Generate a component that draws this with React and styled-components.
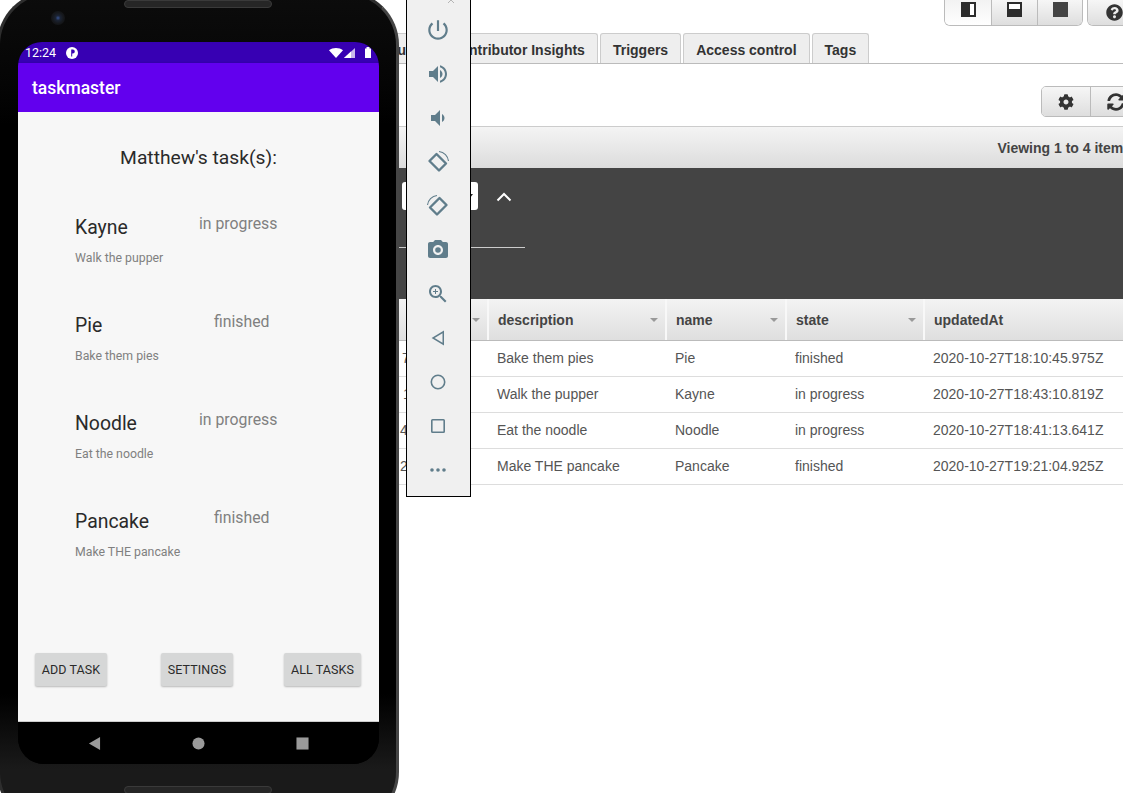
import React from 'react';
import styled, { createGlobalStyle } from 'styled-components';
import { FaCog, FaQuestionCircle, FaSyncAlt } from 'react-icons/fa';

const GlobalStyle = createGlobalStyle`
html, body {
  margin: 0;
  padding: 0;
  background: #fff;
}
* {
  box-sizing: border-box;
}
`;

const Desktop = styled.div`
position: relative;
width: 1123px;
height: 793px;
overflow: hidden;
background: #fff;
font-family: 'Liberation Sans', Arial, sans-serif;
`;

/* aws console window, sits behind the emulator */
const ConsoleWindow = styled.div`
position: absolute;
left: 350px;
top: 0;
width: 808px;
display: flex;
flex-direction: column;
`;

const TopRow = styled.div`
height: 33px;
display: flex;
justify-content: flex-end;
gap: 4px;
padding-right: 16px;
`;

const ButtonGroup = styled.div`
display: flex;
height: ${(p) => p.$height}px;
border: 1px solid #bbb;
border-top: ${(p) => (p.$flush ? 'none' : '1px solid #bbb')};
border-radius: ${(p) => (p.$flush ? '0 0 6px 6px' : '5px')};
overflow: hidden;
`;

const GroupButton = styled.div`
width: ${(p) => p.$width}px;
display: flex;
align-items: center;
justify-content: center;
padding-bottom: ${(p) => (p.$lift ? 6 : 0)}px;
color: #333;
background: ${(p) =>
  p.$active
    ? 'linear-gradient(#f2f2f2, #fff)'
    : 'linear-gradient(#f6f6f6, #dedede)'};
& + & {
  border-left: 1px solid #bbb;
}
`;

const TabRow = styled.div`
height: 31px;
display: flex;
gap: 2px;
padding-left: 1px;
border-bottom: 1px solid #bbb;
`;

const Tab = styled.div`
height: 30px;
padding: 2px 12px 0;
display: flex;
align-items: center;
background: #eee;
border: 1px solid #ccc;
border-bottom: none;
border-radius: 3px 3px 0 0;
color: #333;
font-size: 14px;
font-weight: bold;
white-space: nowrap;
`;

const ActionRow = styled.div`
height: 62px;
display: flex;
justify-content: flex-end;
padding: 22px 17px 0 0;
`;

const ViewingBar = styled.div`
height: 42px;
display: flex;
align-items: center;
justify-content: flex-end;
padding-right: 27px;
background: linear-gradient(#f4f4f4, #dcdcdc);
border-top: 1px solid #ccc;
color: #444;
font-size: 14px;
font-weight: bold;
`;

const FilterPanel = styled.div`
height: 131px;
background: #444;
padding-top: 14px;
`;

const FilterTop = styled.div`
display: flex;
align-items: center;
height: 28px;
padding-left: 52px;
`;

const FilterSelect = styled.div`
width: 76px;
height: 28px;
padding-right: 5px;
display: flex;
align-items: center;
justify-content: flex-end;
background: #fff;
border-radius: 3px;
`;

const SelectCaret = styled.span`
width: 0;
height: 0;
border-left: 3px solid transparent;
border-right: 3px solid transparent;
border-top: 4px solid #222;
`;

const Chevron = styled.svg`
width: 16px;
height: 10px;
margin: 1px 0 0 18px;
`;

const FilterRule = styled.div`
width: 175px;
height: 1px;
margin-top: 37px;
background: #ccc;
`;

const TableHead = styled.div`
display: grid;
grid-template-columns: 137px 178px 120px 138px 1fr;
height: 42px;
background: linear-gradient(#f3f3f3, #dfdfdf);
border-bottom: 1px solid #bbb;
`;

const HeadCell = styled.div`
display: flex;
align-items: center;
justify-content: ${(p) => (p.$first ? 'flex-end' : 'space-between')};
padding: 0 7px 0 9px;
color: #444;
font-size: 14px;
font-weight: bold;
border-left: ${(p) => (p.$first ? 'none' : '2px solid #f8f8f8')};
`;

const SortCaret = styled.span`
width: 0;
height: 0;
border-left: 4px solid transparent;
border-right: 4px solid transparent;
border-top: 4px solid #999;
`;

const TableRow = styled.div`
display: grid;
grid-template-columns: 137px 178px 120px 138px 1fr;
height: 36px;
padding-bottom: 1px;
align-items: center;
border-bottom: 1px solid #ddd;
color: #555;
font-size: 14px;
`;

const Cell = styled.div`
padding-left: ${(p) => p.$pad || 10}px;
white-space: nowrap;
`;

/* emulator side toolbar */
const EmulatorRail = styled.div`
position: absolute;
left: 406px;
top: -30px;
width: 65px;
display: flex;
flex-direction: column;
align-items: center;
padding: 0 1px 4px 0;
background: #f0f0f0;
border: 1px solid #000;
`;

const RailHeader = styled.div`
width: 100%;
height: 37px;
display: flex;
align-items: flex-end;
justify-content: flex-end;
padding: 0 14px 4px 0;
color: #b5b5b5;
`;

const RailButton = styled.div`
width: 44px;
height: 44px;
display: flex;
align-items: center;
justify-content: center;
color: #607d8b;
`;

const RailIcon = styled.svg`
width: ${(p) => p.$size || 24}px;
height: ${(p) => p.$size || 24}px;
fill: currentColor;
transform: ${(p) => (p.$flip ? 'scaleX(-1)' : 'none')};
`;

/* the phone */
const PhoneWindow = styled.div`
position: absolute;
left: -3px;
top: -9px;
width: 402px;
height: 835px;
display: flex;
flex-direction: column;
border: 3px solid #2e2e2e;
border-right-color: #454545;
border-radius: 54px;
background: linear-gradient(#0c0c0c 0, #050505 90px, #000 130px, #000 700px, #1a1a1a 775px);
`;

const TopBezel = styled.div`
height: 48px;
flex: none;
display: flex;
flex-direction: column;
padding-top: 6px;
`;

const Speaker = styled.div`
align-self: center;
width: 148px;
height: 8px;
border-radius: 4px;
background: #262626;
border: 1px solid #3a3a3a;
flex: none;
`;

const Camera = styled.div`
width: 14px;
height: 14px;
margin: 3px 0 0 51px;
border-radius: 50%;
background: radial-gradient(circle, #36518f 0, #1b2333 25%, #16181c 55%, #0e0e0e 100%);
flex: none;
`;

const Screen = styled.div`
width: 361px;
height: 722px;
margin-left: 18px;
flex: none;
display: flex;
flex-direction: column;
border-radius: 24px 24px 26px 26px;
overflow: hidden;
background: #000;
font-family: Roboto, sans-serif;
`;

const StatusBar = styled.div`
height: 21px;
flex: none;
display: flex;
align-items: center;
padding: 0 7px;
background: #3700b3;
color: #fff;
font-size: 12.5px;
`;

const StatusTime = styled.span`
margin-right: 10px;
`;

const StatusRight = styled.div`
margin-left: auto;
display: flex;
align-items: center;
gap: 1px;
`;

const AppBar = styled.div`
height: 49px;
flex: none;
display: flex;
align-items: center;
padding-left: 14px;
background: #6200ee;
color: #fff;
font-size: 17.5px;
font-weight: 500;
box-shadow: 0 1px 3px rgba(0, 0, 0, 0.25);
`;

const Content = styled.div`
height: 610px;
flex: none;
display: flex;
flex-direction: column;
background: #f7f7f7;
border-bottom: 1px solid #ccc;
`;

const Heading = styled.div`
height: 24px;
margin-top: 34px;
text-align: center;
color: #2a2a2a;
font-size: 19.25px;
line-height: 24px;
`;

const TaskList = styled.div`
margin-top: 41px;
display: flex;
flex-direction: column;
`;

const TaskRow = styled.div`
height: 98px;
display: grid;
grid-template-columns: 124px 90px;
grid-template-rows: 32px auto;
align-content: start;
padding-left: 57px;
`;

const TaskName = styled.div`
color: #2a2a2a;
font-size: 19.4px;
line-height: 26px;
padding-top: 4px;
`;

const TaskState = styled.div`
padding: 1px 0 0 ${(p) => (p.$done ? 15 : 0)}px;
color: #808080;
font-size: 15.8px;
line-height: 24px;
white-space: nowrap;
`;

const TaskText = styled.div`
grid-column: 1 / 3;
margin-top: 7px;
color: #808080;
font-size: 12.3px;
line-height: 16px;
`;

const ButtonRow = styled.div`
margin-top: auto;
margin-bottom: 35px;
display: flex;
justify-content: space-between;
padding: 0 18px 0 17px;
`;

const TaskButton = styled.div`
width: ${(p) => p.$width}px;
height: 33px;
margin-left: ${(p) => p.$nudge || 0}px;
display: flex;
align-items: center;
justify-content: center;
border-radius: 2px;
background: #d6d7d7;
box-shadow: 0 1px 2px rgba(0, 0, 0, 0.25);
color: #2a2a2a;
font-size: 12.5px;
letter-spacing: 0.1px;
`;

const NavBar = styled.div`
height: 42px;
flex: none;
display: flex;
align-items: center;
justify-content: center;
gap: 91px;
padding-right: 1px;
background: #000;
color: #9a9a9a;
`;

const NavIcon = styled.svg`
width: 13px;
height: 13px;
fill: currentColor;
`;

const BottomBezel = styled.div`
display: flex;
justify-content: center;
padding-top: 22px;
`;

const tasks = [
  { name: 'Kayne', state: 'in progress', text: 'Walk the pupper' },
  { name: 'Pie', state: 'finished', text: 'Bake them pies' },
  { name: 'Noodle', state: 'in progress', text: 'Eat the noodle' },
  { name: 'Pancake', state: 'finished', text: 'Make THE pancake' },
];

const rows = [
  { id: '7c', pad: 52, text: 'Bake them pies', name: 'Pie', state: 'finished', at: '2020-10-27T18:10:45.975Z' },
  { id: '1a', pad: 53, text: 'Walk the pupper', name: 'Kayne', state: 'in progress', at: '2020-10-27T18:43:10.819Z' },
  { id: '4e', pad: 50, text: 'Eat the noodle', name: 'Noodle', state: 'in progress', at: '2020-10-27T18:41:13.641Z' },
  { id: '2b', pad: 50, text: 'Make THE pancake', name: 'Pancake', state: 'finished', at: '2020-10-27T19:21:04.925Z' },
];

const rotateIcon = (
  <>
    <path d="M4 13.5 11 20.5 20.5 11 13.5 4z" fill="none" stroke="currentColor" strokeWidth="2.4" strokeLinejoin="round" />
    <path d="M1.5 11A10.5 10.5 0 0 1 11 1.5" fill="none" stroke="currentColor" strokeWidth="1.1" />
  </>
);

const railIcons = [
  { size: 26, icon: <path d="M13 3h-2v10h2V3zm4.83 2.17l-1.42 1.42C17.99 7.86 19 9.81 19 12c0 3.87-3.13 7-7 7s-7-3.13-7-7c0-2.19 1.01-4.14 2.58-5.42L6.17 5.17C4.23 6.82 3 9.26 3 12c0 4.97 4.03 9 9 9s9-4.03 9-9c0-2.74-1.23-5.18-3.17-6.83z" /> },
  { icon: <path d="M3 9v6h4l5 5V4L7 9H3zm13.5 3c0-1.77-1.02-3.29-2.5-4.03v8.05c1.48-.73 2.5-2.25 2.5-4.02zM14 3.23v2.06c2.89.86 5 3.54 5 6.71s-2.11 5.85-5 6.71v2.06c4.01-.91 7-4.49 7-8.77s-2.99-7.86-7-8.77z" /> },
  { icon: <path d="M18.5 12c0-1.77-1.02-3.29-2.5-4.03v8.05c1.48-.73 2.5-2.25 2.5-4.02zM5 9v6h4l5 5V4L9 9H5z" /> },
  { flip: true, icon: rotateIcon },
  { icon: rotateIcon },
  { icon: <path fillRule="evenodd" d="M9 2L7.17 4H4c-1.1 0-2 .9-2 2v12c0 1.1.9 2 2 2h16c1.1 0 2-.9 2-2V6c0-1.1-.9-2-2-2h-3.17L15 2H9zm3 15c-2.76 0-5-2.24-5-5s2.24-5 5-5 5 2.24 5 5-2.24 5-5 5zm0-2.2a2.8 2.8 0 1 0 0-5.6 2.8 2.8 0 0 0 0 5.6z" /> },
  { icon: <path d="M15.5 14h-.79l-.28-.27C15.41 12.59 16 11.11 16 9.5 16 5.91 13.09 3 9.5 3S3 5.91 3 9.5 5.91 16 9.5 16c1.61 0 3.09-.59 4.23-1.57l.27.28v.79l5 4.99L20.49 19l-4.99-5zm-6 0C7.01 14 5 11.99 5 9.5S7.01 5 9.5 5 14 7.01 14 9.5 11.99 14 9.5 14zM12 10h-2v2H9v-2H7V9h2V7h1v2h2v1z" /> },
  { icon: <path d="M18 4.6v14.8L5.6 12 18 4.6zM16.5 7.2 8.6 12l7.9 4.8V7.2z" fillRule="evenodd" /> },
  { icon: <path d="M12 4.5a7.5 7.5 0 1 0 0 15 7.5 7.5 0 0 0 0-15zm0 1.6a5.9 5.9 0 1 1 0 11.8 5.9 5.9 0 0 1 0-11.8z" fillRule="evenodd" /> },
  { icon: <path d="M6.5 5h11A1.5 1.5 0 0 1 19 6.5v11a1.5 1.5 0 0 1-1.5 1.5h-11A1.5 1.5 0 0 1 5 17.5v-11A1.5 1.5 0 0 1 6.5 5zm.1 1.6v10.8h10.8V6.6H6.6z" fillRule="evenodd" /> },
  { icon: <path d="M6 10.2a1.8 1.8 0 1 0 0 3.6 1.8 1.8 0 0 0 0-3.6zm6 0a1.8 1.8 0 1 0 0 3.6 1.8 1.8 0 0 0 0-3.6zm6 0a1.8 1.8 0 1 0 0 3.6 1.8 1.8 0 0 0 0-3.6z" /> },
];

const PaneIcon = ({ kind }) => (
  <svg width="15" height="15" viewBox="0 0 15 15">
    <rect width="15" height="15" fill={kind === 'full' ? '#444' : '#2c2c2c'} />
    {kind === 'left' && <rect x="9" y="2" width="4" height="11" fill="#fff" />}
    {kind === 'bottom' && <rect x="2" y="2" width="11" height="5" fill="#fff" />}
  </svg>
);

const App = () => (
  <Desktop>
    <GlobalStyle />
    <ConsoleWindow>
      <TopRow>
        <ButtonGroup $height={26} $flush>
          <GroupButton $width={46} $active $lift><PaneIcon kind="left" /></GroupButton>
          <GroupButton $width={46} $lift><PaneIcon kind="bottom" /></GroupButton>
          <GroupButton $width={45} $lift><PaneIcon kind="full" /></GroupButton>
        </ButtonGroup>
        <ButtonGroup $height={26} $flush>
          <GroupButton $width={53}><FaQuestionCircle size={17} color="#333" /></GroupButton>
        </ButtonGroup>
      </TopRow>
      <TabRow>
        <Tab>Backups</Tab>
        <Tab>Contributor Insights</Tab>
        <Tab>Triggers</Tab>
        <Tab>Access control</Tab>
        <Tab>Tags</Tab>
      </TabRow>
      <ActionRow>
        <ButtonGroup $height={31}>
          <GroupButton $width={48}><FaCog size={16} color="#333" /></GroupButton>
          <GroupButton $width={50}><FaSyncAlt size={18} color="#333" /></GroupButton>
        </ButtonGroup>
      </ActionRow>
      <ViewingBar>Viewing 1 to 4 items</ViewingBar>
      <FilterPanel>
        <FilterTop>
          <FilterSelect><SelectCaret /></FilterSelect>
          <Chevron viewBox="0 0 16 10">
            <path d="M1.5 8.5 8 2l6.5 6.5" fill="none" stroke="#fff" strokeWidth="2" />
          </Chevron>
        </FilterTop>
        <FilterRule />
      </FilterPanel>
      <TableHead>
        <HeadCell $first><SortCaret /></HeadCell>
        <HeadCell>description<SortCaret /></HeadCell>
        <HeadCell>name<SortCaret /></HeadCell>
        <HeadCell>state<SortCaret /></HeadCell>
        <HeadCell>updatedAt</HeadCell>
      </TableHead>
      {rows.map((row) => (
        <TableRow key={row.name}>
          <Cell $pad={row.pad}>{row.id}</Cell>
          <Cell>{row.text}</Cell>
          <Cell>{row.name}</Cell>
          <Cell>{row.state}</Cell>
          <Cell>{row.at}</Cell>
        </TableRow>
      ))}
    </ConsoleWindow>

    <EmulatorRail>
      <RailHeader>
        <svg width="8" height="8" viewBox="0 0 8 8">
          <path d="M1 1l6 6M7 1 1 7" stroke="currentColor" strokeWidth="1" />
        </svg>
      </RailHeader>
      {railIcons.map((item, i) => (
        <RailButton key={i}>
          <RailIcon viewBox="0 0 24 24" $size={item.size} $flip={item.flip}>
            {item.icon}
          </RailIcon>
        </RailButton>
      ))}
    </EmulatorRail>

    <PhoneWindow>
      <TopBezel>
        <Speaker />
        <Camera />
      </TopBezel>
      <Screen>
        <StatusBar>
          <StatusTime>12:24</StatusTime>
          <svg width="12" height="12" viewBox="0 0 12 12">
            <circle cx="6" cy="6" r="6" fill="#fff" />
            <path d="M5.2 2.6h1.6a2 2 0 0 1 0 4H6.2v3H5.2z" fill="#3700b3" />
          </svg>
          <StatusRight>
            <svg width="14" height="10" viewBox="0 0 14 10">
              <path d="M7 10 0 2.2C2 .8 4.4 0 7 0s5 .8 7 2.2z" fill="#fff" />
            </svg>
            <svg width="12" height="10" viewBox="0 0 12 10">
              <path d="M0 10 11 0v10z" fill="#c9b8ec" />
              <path d="M0 10 7 3.6V10z" fill="#fff" />
            </svg>
            <svg width="15" height="11" viewBox="0 0 15 11">
              <path d="M8 1.5h1.5V0h3v1.5H14V11H8z" fill="#fff" />
            </svg>
          </StatusRight>
        </StatusBar>
        <AppBar>taskmaster</AppBar>
        <Content>
          <Heading>Matthew's task(s):</Heading>
          <TaskList>
            {tasks.map((task) => (
              <TaskRow key={task.name}>
                <TaskName>{task.name}</TaskName>
                <TaskState $done={task.state === 'finished'}>{task.state}</TaskState>
                <TaskText>{task.text}</TaskText>
              </TaskRow>
            ))}
          </TaskList>
          <ButtonRow>
            <TaskButton $width={72}>ADD TASK</TaskButton>
            <TaskButton $width={72} $nudge={3}>SETTINGS</TaskButton>
            <TaskButton $width={77}>ALL TASKS</TaskButton>
          </ButtonRow>
        </Content>
        <NavBar>
          <NavIcon viewBox="0 0 14 14"><path d="M13 0v14L1 7z" /></NavIcon>
          <NavIcon viewBox="0 0 14 14"><circle cx="7" cy="7" r="6.5" /></NavIcon>
          <NavIcon viewBox="0 0 14 14"><rect x="0.5" y="0.5" width="13" height="13" /></NavIcon>
        </NavBar>
      </Screen>
      <BottomBezel>
        <Speaker />
      </BottomBezel>
    </PhoneWindow>
  </Desktop>
);

export default App;
